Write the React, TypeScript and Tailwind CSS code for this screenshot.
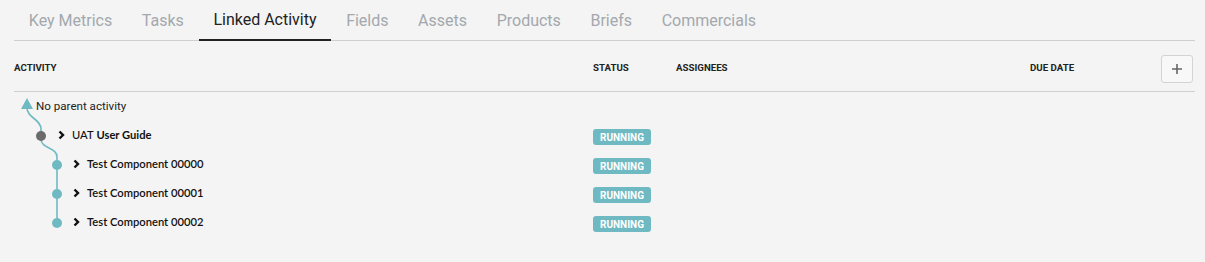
import React from 'react';

const tabs = ['Key Metrics', 'Tasks', 'Linked Activity', 'Fields', 'Assets', 'Products', 'Briefs', 'Commercials'];

interface Row {
    id: string;
    prefix?: string;
    name: string;
    depth: number;
}

const rows: Row[] = [
    { id: 'uat', prefix: 'UAT', name: 'User Guide', depth: 0 },
    { id: 'c0', name: 'Test Component 00000', depth: 1 },
    { id: 'c1', name: 'Test Component 00001', depth: 1 },
    { id: 'c2', name: 'Test Component 00002', depth: 1 },
];

const Chevron = () => (
    <svg width="7" height="10" viewBox="0 0 7 10" className="shrink-0">
        <polyline points="1.5,1.5 5,5 1.5,8.5" fill="none" stroke="#111" strokeWidth="2.4" strokeLinejoin="miter" />
    </svg>
);

const StatusBadge = () => (
    <span className="inline-flex items-center justify-center h-[16px] w-[58px] rounded-[3px] bg-[#6fbac2] text-white text-[10px] font-bold font-['Roboto',sans-serif]">
        RUNNING
    </span>
);

// tree connector drawing, coords relative to the list container
const TreeLines = () => (
    <svg width="80" height="150" className="absolute left-0 top-0 pointer-events-none">
        <polygon points="27,6 21,17 33,17" fill="#6fbac2" />
        <path d="M27,16 C27,26 41,27 41,37 L41,43" fill="none" stroke="#6fbac2" strokeWidth="1.6" />
        <path d="M41,47 C41,57 57,55 57,65 L57,131" fill="none" stroke="#6fbac2" strokeWidth="1.6" />
        <circle cx="41" cy="44" r="5" fill="#6b6b6b" />
        <circle cx="57" cy="73" r="5" fill="#6fbac2" />
        <circle cx="57" cy="102" r="5" fill="#6fbac2" />
        <circle cx="57" cy="131" r="5" fill="#6fbac2" />
    </svg>
);

const cols = 'grid grid-cols-[579px_83px_354px_1fr_auto] items-center';

export default function App() {
    return (
        <div className="w-[1205px] h-[262px] bg-[#f4f4f4] font-['Roboto',sans-serif] overflow-hidden">
            {/* tabs */}
            <div className="ml-[14px] mr-[10px] flex border-b border-[#cfcfcf] h-[41px]">
                {tabs.map(t => {
                    const active = t === 'Linked Activity';
                    return (
                        <div
                            key={t}
                            className={`px-[14.8px] flex items-center text-[16px] -mb-px ${active ? 'text-[#222] border-b-2 border-[#222]' : 'text-[#a3a8ad]'}`}
                        >
                            {t}
                        </div>
                    );
                })}
            </div>

            {/* header */}
            <div className={`${cols} ml-[14px] mr-[10px] h-[51px] pt-[5px] border-b border-[#cfcfcf] text-[9.7px] font-bold text-[#222]`}>
                <div>ACTIVITY</div>
                <div>STATUS</div>
                <div>ASSIGNEES</div>
                <div>DUE DATE</div>
                <button className="w-[32px] h-[28px] mr-[2px] flex items-center justify-center border border-[#d3d3d3] rounded-[3px] bg-[#f8f8f8]">
                    <svg width="12" height="12" viewBox="0 0 12 12">
                        <path d="M6 1v10M1 6h10" stroke="#666" strokeWidth="1.6" />
                    </svg>
                </button>
            </div>

            {/* list */}
            <div className="relative">
                <TreeLines />
                <div className="ml-[14px] mr-[10px] h-[28px] pt-[2px] flex items-center pl-[22px] text-[11.6px] text-[#222]">
                    No parent activity
                </div>
                {rows.map(r => (
                    <div key={r.id} className={`${cols} ml-[14px] mr-[10px] h-[29px] pt-[2px]`}>
                        <div className={`flex items-center gap-[7px] font-['Lato',sans-serif] text-[11.2px] text-[#111] ${r.depth === 0 ? 'pl-[44px]' : 'pl-[59px]'}`}>
                            <Chevron />
                            {r.prefix ? (
                                <span>
                                    <span className="font-medium">{r.prefix}</span>{' '}
                                    <span className="font-bold">{r.name}</span>
                                </span>
                            ) : (
                                <span className="font-semibold">{r.name}</span>
                            )}
                        </div>
                        <div>
                            <StatusBadge />
                        </div>
                        <div></div>
                        <div></div>
                        <div className="w-[34px]"></div>
                    </div>
                ))}
            </div>
        </div>
    );
}
